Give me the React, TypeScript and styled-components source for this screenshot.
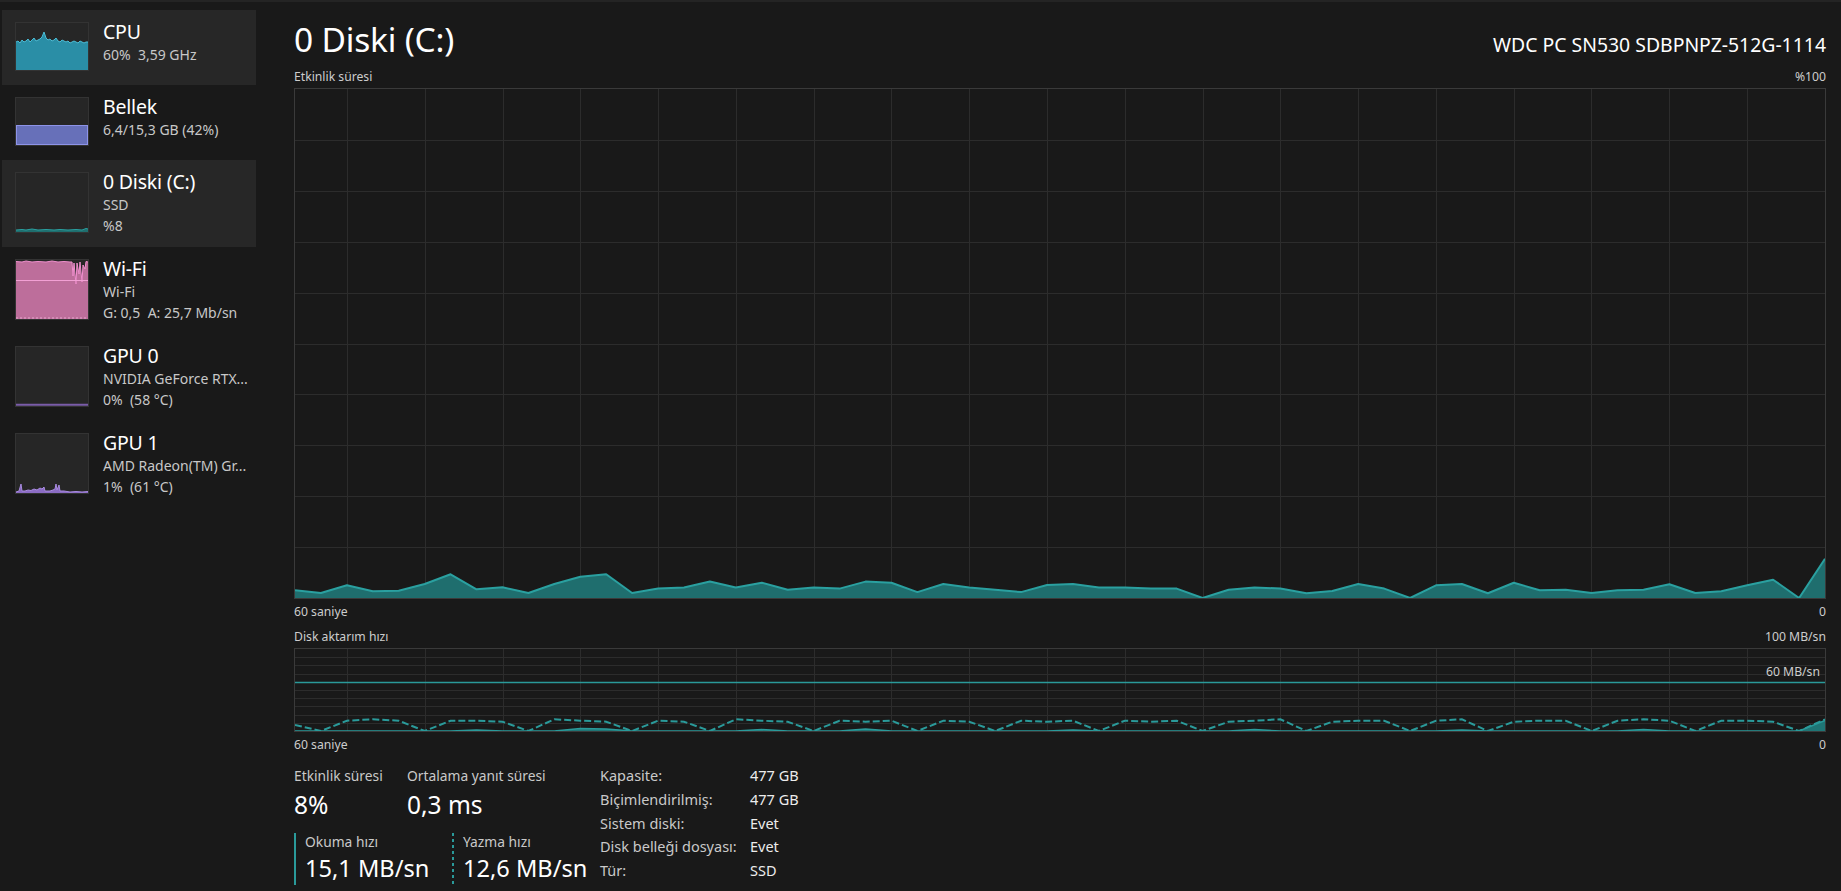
import React from "react";
import styled, { createGlobalStyle } from "styled-components";

const FONT = `"Noto Sans", "Open Sans", "Liberation Sans", sans-serif`;

const GlobalStyle = createGlobalStyle`
  html, body { margin: 0; padding: 0; background: #191919; }
  body { font-family: ${FONT}; color: #ffffff; }
  * { box-sizing: border-box; }
`;

const Root = styled.div`
  display: flex;
  width: 1841px;
  height: 891px;
  background: #191919;
  border-top: 2px solid #242424;
  overflow: hidden;
`;

/* ---------- Sidebar ---------- */
const Sidebar = styled.nav`
  width: 258px;
  flex: none;
  padding: 8px 0 0 2px;
  display: flex;
  flex-direction: column;
`;

const Card = styled.div<{ $selected?: boolean; $tall?: boolean }>`
  width: 254px;
  height: ${(p) => (p.$tall ? 87 : 75)}px;
  display: flex;
  gap: 14px;
  padding: 12px 13px 0 13px;
  background: ${(p) => (p.$selected ? "#272727" : "transparent")};
`;

const Thumb = styled.div<{ $tall?: boolean }>`
  width: 74px;
  height: ${(p) => (p.$tall ? 61 : 49)}px;
  flex: none;
  background: #262626;
  border: 1px solid #333333;
  svg {
    display: block;
    width: 100%;
    height: 100%;
  }
`;

const CardText = styled.div`
  margin-top: -2px;
  display: flex;
  flex-direction: column;
  min-width: 0;
`;

const CardTitle = styled.div`
  font-size: 19.5px;
  line-height: 24px;
  color: #ffffff;
  white-space: nowrap;
  letter-spacing: -0.2px;
`;

const CardSub = styled.div`
  font-size: 14px;
  line-height: 21px;
  color: #c8c8c8;
  white-space: pre;
`;

/* ---------- Main ---------- */
const Main = styled.main`
  flex: 1;
  min-width: 0;
  padding: 0 15px 0 36px;
  display: flex;
  flex-direction: column;
`;

const Header = styled.header`
  height: 66px;
  padding-top: 15px;
  display: flex;
  justify-content: space-between;
  align-items: baseline;
`;

const Title = styled.h1`
  margin: 0;
  font-size: 33.5px;
  line-height: 44px;
  font-weight: 400;
  color: #ffffff;
  letter-spacing: -0.2px;
`;

const Model = styled.div`
  font-size: 19.4px;
  line-height: 26px;
  color: #ffffff;
`;

const LabelRow = styled.div<{ $gap?: number }>`
  margin-top: ${(p) => p.$gap ?? 0}px;
  height: 18px;
  display: flex;
  justify-content: space-between;
  font-size: 12.2px;
  line-height: 18px;
  color: #cdcdcd;
`;

const ChartBox = styled.div<{ $h: number; $gap?: number }>`
  position: relative;
  margin-top: ${(p) => p.$gap ?? 2}px;
  height: ${(p) => p.$h}px;
  border: 1px solid #3a3a3a;
  svg {
    display: block;
    width: 100%;
    height: 100%;
  }
`;

const OverlayLabel = styled.span`
  position: absolute;
  right: 5px;
  top: 14px;
  font-size: 12.2px;
  line-height: 18px;
  color: #cdcdcd;
`;

/* ---------- Stats ---------- */
const Stats = styled.section`
  margin-top: 12px;
  display: flex;
  align-items: flex-start;
`;

const StatsLeft = styled.div`
  width: 306px;
  flex: none;
  display: flex;
  flex-direction: column;
`;

const StatRow = styled.div<{ $gap?: number }>`
  display: flex;
  margin-top: ${(p) => p.$gap ?? 0}px;
`;

const Stat = styled.div<{ $w?: number }>`
  width: ${(p) => (p.$w ? `${p.$w}px` : "auto")};
  flex: none;
`;

const StatLabel = styled.div`
  font-size: 13.8px;
  line-height: 20px;
  color: #c9c9c9;
  white-space: nowrap;
`;

const StatValue = styled.div`
  margin-top: 3px;
  font-size: 24.5px;
  line-height: 32px;
  color: #ffffff;
  white-space: nowrap;
`;

const SpeedStat = styled.div<{ $w?: number; $dashed?: boolean }>`
  width: ${(p) => (p.$w ? `${p.$w}px` : "auto")};
  flex: none;
  padding-left: 11px;
  background-image: ${(p) =>
    p.$dashed
      ? "repeating-linear-gradient(to bottom, #2a9a9a 0 3px, transparent 3px 6px)"
      : "linear-gradient(#2a9a9a, #2a9a9a)"};
  background-size: 2px 100%;
  background-repeat: no-repeat;
  background-position: left top;
`;

const SpeedLabel = styled.div`
  font-size: 13.8px;
  line-height: 18px;
  color: #c9c9c9;
  white-space: nowrap;
`;

const SpeedValue = styled.div`
  font-size: 23.6px;
  line-height: 34px;
  color: #ffffff;
  white-space: nowrap;
`;

const InfoTable = styled.dl`
  margin: -2px 0 0 0;
  display: grid;
  grid-template-columns: 150px auto;
  font-size: 14.5px;
  line-height: 23.8px;
`;

const InfoKey = styled.dt`
  margin: 0;
  color: #c9c9c9;
  white-space: nowrap;
`;

const InfoVal = styled.dd`
  margin: 0;
  color: #ececec;
  white-space: nowrap;
`;

/* ---------- Data ---------- */
const activity = [
  7.7, 5, 12.7, 6.7, 7.3, 14, 23.7, 8.7, 10.7, 5, 14, 21.3, 23.7, 5, 9.4, 10.6, 16.4, 10.6, 15.3, 8.2,
  10.6, 9.4, 16.4, 15.3, 5.9, 14, 10.6, 8.2, 5.9, 13, 14, 10.6, 10.6, 9.4, 9.4, 0, 8.2, 10.6, 9.4, 4.7,
  7, 14, 9.4, 0, 12.7, 14, 4.7, 15.3, 7.7, 8.3, 5, 7.7, 8.3, 13.7, 5, 6.7, 12.7, 18.3, 0, 39.3,
];

const writeZeros = new Set([1, 5, 9, 13, 16, 20, 24, 27, 31, 35, 39, 43, 46, 50, 54, 58]);
const writeHigh = [10.3, 9.3, 10.3, 11.7, 10.3, 9.3, 10.3];
const writeSpeed = Array.from({ length: 60 }, (_, i) => {
  if (writeZeros.has(i)) return 0;
  if (i === 0) return 6;
  return writeHigh[i % writeHigh.length];
});

const readSpeed = Array.from({ length: 60 }, (_, i) => {
  const bumps: Record<number, number> = { 7: 1, 11: 2.5, 12: 2, 18: 1.5, 22: 2, 30: 1, 37: 1.5, 45: 1, 52: 1.5, 59: 10.5 };
  return bumps[i] ?? 0;
});

const W = 1530;

function Grid({ h, rows }: { h: number; rows: number }) {
  const vx = Array.from({ length: 19 }, (_, k) => Math.round(52 + k * 77.78) + 0.5);
  const hy = Array.from({ length: rows - 1 }, (_, k) => Math.round(((k + 1) * h) / rows) + 0.5);
  return (
    <g stroke="#2c2c2c" strokeWidth={1}>
      {vx.map((x) => (
        <line key={`v${x}`} x1={x} y1={0} x2={x} y2={h} />
      ))}
      {hy.map((y) => (
        <line key={`h${y}`} x1={0} y1={y} x2={W} y2={y} />
      ))}
    </g>
  );
}

function pts(data: number[], h: number) {
  return data.map((v, i) => `${((i * W) / 59).toFixed(1)},${(h - v).toFixed(1)}`).join(" ");
}

function ActivityChart() {
  const h = 509;
  const line = pts(activity, h);
  return (
    <svg viewBox={`0 0 ${W} ${h}`} preserveAspectRatio="none">
      <Grid h={h} rows={10} />
      <polygon points={`0,${h} ${line} ${W},${h}`} fill="#1f6e6e" />
      <polyline points={line} fill="none" stroke="#2aa0a0" strokeWidth={2} strokeLinejoin="round" />
    </svg>
  );
}

function TransferChart() {
  const h = 82;
  const w = pts(writeSpeed, h);
  const r = pts(readSpeed, h);
  const lim = Math.round(h * 0.4) + 0.5;
  return (
    <svg viewBox={`0 0 ${W} ${h}`} preserveAspectRatio="none">
      <Grid h={h} rows={10} />
      <line x1={0} y1={lim} x2={W} y2={lim} stroke="#2a9a9a" strokeWidth={1.5} />
      <polygon points={`0,${h} ${r} ${W},${h}`} fill="#1f7575" />
      <polyline points={r} fill="none" stroke="#2a9a9a" strokeWidth={1.5} />
      <polyline points={w} fill="none" stroke="#2a9a9a" strokeWidth={2} strokeDasharray="7 3" />
    </svg>
  );
}

/* ---------- Thumbnails ---------- */
const cpuTop = [
  19, 18, 20, 17, 19, 18, 16, 19, 17, 15, 18, 17, 16, 14, 9, 15, 17, 16, 18, 17, 15, 18, 19, 17, 18, 19,
  18, 20, 19, 18, 19, 20, 18, 19, 20, 19, 19,
];

function CpuThumb() {
  const line = cpuTop.map((y, i) => `${i * 2},${y}`).join(" ");
  return (
    <svg viewBox="0 0 72 47" preserveAspectRatio="none">
      <polygon points={`0,47 ${line} 72,47`} fill="#2a8ea6" />
      <polyline points={line} fill="none" stroke="#4cbdd6" strokeWidth={1} />
    </svg>
  );
}

function MemThumb() {
  return (
    <svg viewBox="0 0 72 47" preserveAspectRatio="none">
      <rect x={0.5} y={27.5} width={71} height={19} fill="#6770b9" stroke="#8d93e8" strokeWidth={1} />
    </svg>
  );
}

function DiskThumb() {
  const line = "0,57 6,56.5 10,57 16,56 22,57 30,56.5 38,57 44,56.5 52,57 60,56.5 66,57 70,55.5 72,56";
  return (
    <svg viewBox="0 0 72 59" preserveAspectRatio="none">
      <polygon points={`0,59 ${line} 72,59`} fill="#1f6e6e" />
      <polyline points={line} fill="none" stroke="#2aa0a0" strokeWidth={1} />
    </svg>
  );
}

function WifiThumb() {
  const line =
    "0,1.5 6,2 10,1 16,2 22,1.5 30,2 36,1 42,2 48,1.5 54,2 56,2 57,16 58,3 60,24 61,3 63,14 64,2 66,22 67,5 69,9 70,1.5 72,2";
  return (
    <svg viewBox="0 0 72 59" preserveAspectRatio="none">
      <polygon points={`0,59 ${line} 72,59`} fill="#bd6e9b" />
      <polyline points={line} fill="none" stroke="#f08fcd" strokeWidth={1} />
      <line x1={0} y1={20.5} x2={72} y2={20.5} stroke="#f2a0d4" strokeWidth={1} />
      <line x1={0} y1={58} x2={72} y2={58} stroke="#e8a6cf" strokeWidth={1} strokeDasharray="2 2" />
    </svg>
  );
}

function Gpu0Thumb() {
  return (
    <svg viewBox="0 0 72 47" preserveAspectRatio="none">
      <line x1={0} y1={46} x2={72} y2={46} stroke="#7a5ca8" strokeWidth={1.5} />
    </svg>
  );
}

function Gpu1Thumb() {
  const line =
    "0,58 3,57 5,50 6,57 9,57 12,56 15,56.5 18,55 21,56 24,54 26,55 28,53 29,57 31,57 34,57 37,56 39,55 40,50 41,56 43,51 44,57 48,57 54,58 60,57.5 66,58 72,57.5";
  return (
    <svg viewBox="0 0 72 59" preserveAspectRatio="none">
      <polygon points={`0,59 ${line} 72,59`} fill="#8b6cc3" />
      <polyline points={line} fill="none" stroke="#a88ae0" strokeWidth={1} />
    </svg>
  );
}

type Item = {
  title: string;
  subs: string[];
  tall?: boolean;
  selected?: boolean;
  thumb: React.ReactNode;
};

const items: Item[] = [
  { title: "CPU", subs: ["60%  3,59 GHz"], selected: true, thumb: <CpuThumb /> },
  { title: "Bellek", subs: ["6,4/15,3 GB (42%)"], thumb: <MemThumb /> },
  { title: "0 Diski (C:)", subs: ["SSD", "%8"], tall: true, selected: true, thumb: <DiskThumb /> },
  { title: "Wi-Fi", subs: ["Wi-Fi", "G: 0,5  A: 25,7 Mb/sn"], tall: true, thumb: <WifiThumb /> },
  { title: "GPU 0", subs: ["NVIDIA GeForce RTX...", "0%  (58 °C)"], tall: true, thumb: <Gpu0Thumb /> },
  { title: "GPU 1", subs: ["AMD Radeon(TM) Gr...", "1%  (61 °C)"], tall: true, thumb: <Gpu1Thumb /> },
];

const info: [string, string][] = [
  ["Kapasite:", "477 GB"],
  ["Biçimlendirilmiş:", "477 GB"],
  ["Sistem diski:", "Evet"],
  ["Disk belleği dosyası:", "Evet"],
  ["Tür:", "SSD"],
];

export default function App() {
  return (
    <>
      <GlobalStyle />
      <Root>
        <Sidebar>
          {items.map((it) => (
            <Card key={it.title} $selected={it.selected} $tall={it.tall}>
              <Thumb $tall={it.tall}>{it.thumb}</Thumb>
              <CardText>
                <CardTitle>{it.title}</CardTitle>
                {it.subs.map((s) => (
                  <CardSub key={s}>{s}</CardSub>
                ))}
              </CardText>
            </Card>
          ))}
        </Sidebar>

        <Main>
          <Header>
            <Title>0 Diski (C:)</Title>
            <Model>WDC PC SN530 SDBPNPZ-512G-1114</Model>
          </Header>

          <LabelRow>
            <span>Etkinlik süresi</span>
            <span>%100</span>
          </LabelRow>
          <ChartBox $h={511}>
            <ActivityChart />
          </ChartBox>
          <LabelRow $gap={4}>
            <span>60 saniye</span>
            <span>0</span>
          </LabelRow>

          <LabelRow $gap={7}>
            <span>Disk aktarım hızı</span>
            <span>100 MB/sn</span>
          </LabelRow>
          <ChartBox $h={84}>
            <TransferChart />
            <OverlayLabel>60 MB/sn</OverlayLabel>
          </ChartBox>
          <LabelRow $gap={4}>
            <span>60 saniye</span>
            <span>0</span>
          </LabelRow>

          <Stats>
            <StatsLeft>
              <StatRow>
                <Stat $w={113}>
                  <StatLabel>Etkinlik süresi</StatLabel>
                  <StatValue>8%</StatValue>
                </Stat>
                <Stat>
                  <StatLabel>Ortalama yanıt süresi</StatLabel>
                  <StatValue>0,3 ms</StatValue>
                </Stat>
              </StatRow>
              <StatRow $gap={12}>
                <SpeedStat $w={158}>
                  <SpeedLabel>Okuma hızı</SpeedLabel>
                  <SpeedValue>15,1 MB/sn</SpeedValue>
                </SpeedStat>
                <SpeedStat $dashed>
                  <SpeedLabel>Yazma hızı</SpeedLabel>
                  <SpeedValue>12,6 MB/sn</SpeedValue>
                </SpeedStat>
              </StatRow>
            </StatsLeft>
            <InfoTable>
              {info.map(([k, v]) => (
                <React.Fragment key={k}>
                  <InfoKey>{k}</InfoKey>
                  <InfoVal>{v}</InfoVal>
                </React.Fragment>
              ))}
            </InfoTable>
          </Stats>
        </Main>
      </Root>
    </>
  );
}
